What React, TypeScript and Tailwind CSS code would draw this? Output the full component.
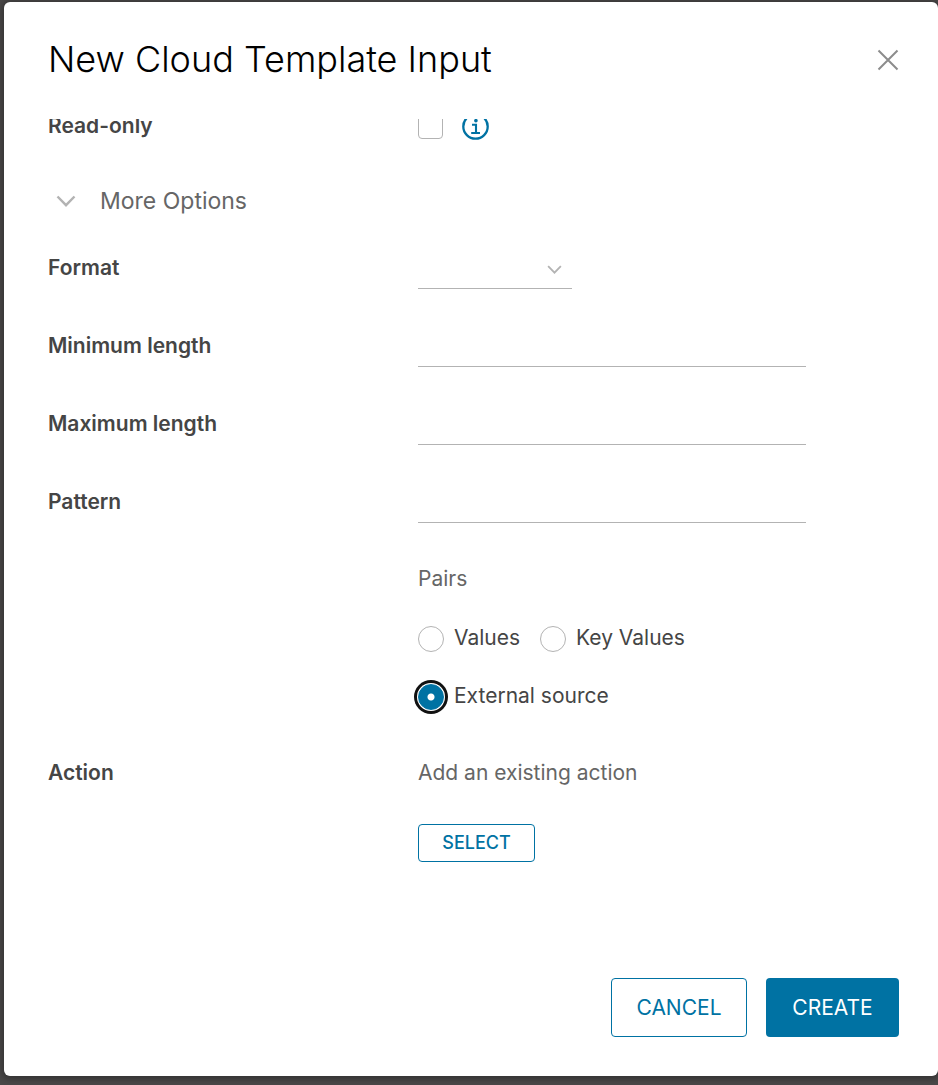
import { useState, type ReactNode } from "react";

function Chevron({ className }: { className: string }) {
  return (
    <svg viewBox="0 0 20 12" className={className} fill="none" stroke="currentColor" strokeWidth="2.4" aria-hidden="true">
      <path d="M1.5 1.5 10 10.2 18.5 1.5" />
    </svg>
  );
}

function InfoIcon() {
  return (
    <svg viewBox="0 0 27 27" className="size-[27px]" fill="none" stroke="currentColor" aria-hidden="true">
      <circle cx="13.5" cy="13.5" r="12.2" strokeWidth="2.3" />
      <circle cx="13.9" cy="7.7" r="1.8" fill="currentColor" stroke="none" />
      <path d="M10 11.8H14v8M9.2 20h8.8" strokeWidth="2.1" />
    </svg>
  );
}

function Field({ label, htmlFor, children }: { label: string; htmlFor: string; children: ReactNode }) {
  return (
    <div className="flex h-10 items-center">
      <label htmlFor={htmlFor} className="w-[370px] shrink-0 pb-0.5 font-semibold">
        {label}
      </label>
      {children}
    </div>
  );
}

function TextField({ label, id }: { label: string; id: string }) {
  return (
    <Field label={label} htmlFor={id}>
      <input id={id} type="text" className="h-10 w-full max-w-[388px] border-b border-[#b3b3b3] bg-transparent outline-none" />
    </Field>
  );
}

function Radio({ label, checked, onSelect }: { label: string; checked: boolean; onSelect: () => void }) {
  return (
    <label className="flex h-7 items-center gap-2.5">
      <input
        type="radio"
        name="pairs"
        checked={checked}
        onChange={onSelect}
        className="size-[26px] shrink-0 appearance-none rounded-full border border-[#b3b3b3] bg-white outline-none checked:border-[#0072a3] checked:bg-[radial-gradient(circle,#fff_3px,#0072a3_4px)] checked:shadow-[0_0_0_1px_#fff,0_0_0_4px_#111]"
      />
      <span className="pb-0.5">{label}</span>
    </label>
  );
}

export default function App() {
  const [source, setSource] = useState("External source");

  return (
    <div className="flex min-h-screen bg-[#4a4848] pt-0.5 pb-[9px] pl-1 font-[Inter,sans-serif] text-[21px] leading-7 text-[#454545]">
      <div
        role="dialog"
        aria-labelledby="dialog-title"
        className="flex flex-1 flex-col rounded-md bg-white pr-[39px] pl-11 shadow-[0_1px_6px_2px_rgba(0,0,0,0.3)]"
      >
        <header className="flex items-center justify-between pt-[37px] pb-10">
          <h1 id="dialog-title" className="text-4xl leading-10 font-light text-black">
            New Cloud Template Input
          </h1>
          <button type="button" aria-label="Close" className="pt-0.5 text-[#8c8c8c]">
            <svg viewBox="0 0 22 22" className="size-[22px]" fill="none" stroke="currentColor" strokeWidth="2" aria-hidden="true">
              <path d="M1.5 1.5l19 19M20.5 1.5l-19 19" />
            </svg>
          </button>
        </header>

        <div className="flex-1 overflow-hidden">
          <div className="-mt-[7px] flex h-7 items-center">
            <label htmlFor="read-only" className="w-[370px] shrink-0 font-semibold">
              Read-only
            </label>
            <input id="read-only" type="checkbox" className="size-[25px] appearance-none rounded border border-[#b3b3b3] checked:bg-[#0072a3]" />
            <button type="button" aria-label="About read-only" className="ml-[19px] text-[#0072a3]">
              <InfoIcon />
            </button>
          </div>

          <button type="button" className="mt-[45px] flex h-8 items-center gap-6 pl-2 text-[23px] text-[#666]">
            <Chevron className="h-3 w-5 text-[#b3b3b3]" />
            More Options
          </button>

          <div className="mt-8 flex flex-col gap-[38px]">
            <Field label="Format" htmlFor="format">
              <div className="grid w-[154px] items-center">
                <select id="format" className="col-start-1 row-start-1 h-10 appearance-none border-b border-[#b3b3b3] bg-transparent outline-none">
                  <option value="" />
                </select>
                <Chevron className="pointer-events-none col-start-1 row-start-1 mr-2.5 h-[9px] w-[15px] justify-self-end text-[#b3b3b3]" />
              </div>
            </Field>
            <TextField label="Minimum length" id="minimum-length" />
            <TextField label="Maximum length" id="maximum-length" />
            <TextField label="Pattern" id="pattern" />
          </div>

          <fieldset className="mt-[42px] ml-[370px]">
            <legend className="mb-8 text-[#666]">Pairs</legend>
            <div className="flex max-w-[388px] flex-wrap gap-x-5 gap-y-[30px] pr-10">
              {["Values", "Key Values", "External source"].map((name) => (
                <Radio key={name} label={name} checked={source === name} onSelect={() => setSource(name)} />
              ))}
            </div>
          </fieldset>

          <div className="mt-12 flex">
            <div className="w-[370px] shrink-0 font-semibold">Action</div>
            <div>
              <p className="text-[#666]">Add an existing action</p>
              <button
                type="button"
                className="mt-[37px] h-[38px] w-[117px] rounded border border-[#0072a3] text-lg font-medium text-[#0072a3]"
              >
                SELECT
              </button>
            </div>
          </div>
        </div>

        <footer className="flex justify-end gap-[19px] pb-[39px]">
          <button type="button" className="h-[59px] w-[136px] rounded border border-[#0072a3] text-[#0072a3]">
            CANCEL
          </button>
          <button type="button" className="h-[59px] w-[133px] rounded bg-[#0072a3] text-white">
            CREATE
          </button>
        </footer>
      </div>
    </div>
  );
}
